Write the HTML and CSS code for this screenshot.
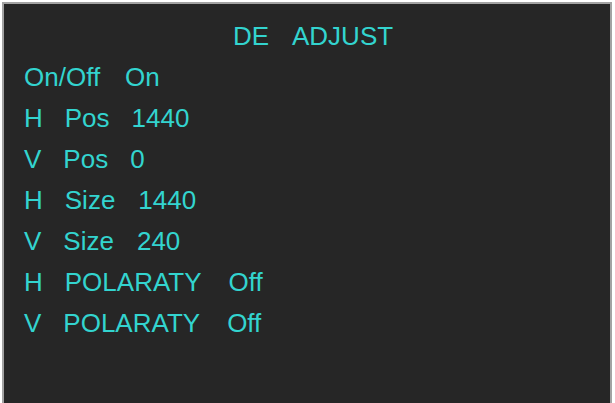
FILE: index.html
```html
<!DOCTYPE html>
<html lang="en">
<head>
    <meta charset="UTF-8">
    <meta name="viewport" content="width=device-width, initial-scale=1.0">
    <title>DE ADJUST</title>
    <link rel="stylesheet" href="styles.css">
</head>
<body>
    <div class="osd">
        <div class="osd-title">
            <span>DE</span>
            <span>ADJUST</span>
        </div>
        <div class="osd-row">
            <span>On/Off</span>
            <span class="value wide">On</span>
        </div>
        <div class="osd-row">
            <span>H</span>
            <span>Pos</span>
            <span class="value">1440</span>
        </div>
        <div class="osd-row">
            <span>V</span>
            <span>Pos</span>
            <span class="value">0</span>
        </div>
        <div class="osd-row">
            <span>H</span>
            <span>Size</span>
            <span class="value nudge">1440</span>
        </div>
        <div class="osd-row">
            <span>V</span>
            <span>Size</span>
            <span class="value nudge">240</span>
        </div>
        <div class="osd-row">
            <span>H</span>
            <span>POLARATY</span>
            <span class="value wider">Off</span>
        </div>
        <div class="osd-row">
            <span>V</span>
            <span>POLARATY</span>
            <span class="value wider">Off</span>
        </div>
    </div>
</body>
</html>
```

FILE: styles.css
```css
body {
    margin: 0;
    padding: 0;
    background: #fff;
    font-family: 'Liberation Sans', Arial, sans-serif;
}

.osd {
    box-sizing: border-box;
    height: calc(100vh - 2px);
    margin: 2px 3px 0 2px;
    padding: 12px 0 0 20px;
    background: #262626;
    border: 2px solid #a3a3a3;
    border-bottom: none;
    color: #33d4cf;
    font-size: 26px;
    line-height: 41px;
}

.osd-title {
    display: flex;
    justify-content: center;
    gap: 23px;
    padding-right: 8px;
}

.osd-row {
    display: flex;
    gap: 22px;
}

.value.nudge {
    margin-left: 1px;
}

.value.wide {
    margin-left: 3px;
}

.value.wider {
    margin-left: 5px;
}
```
